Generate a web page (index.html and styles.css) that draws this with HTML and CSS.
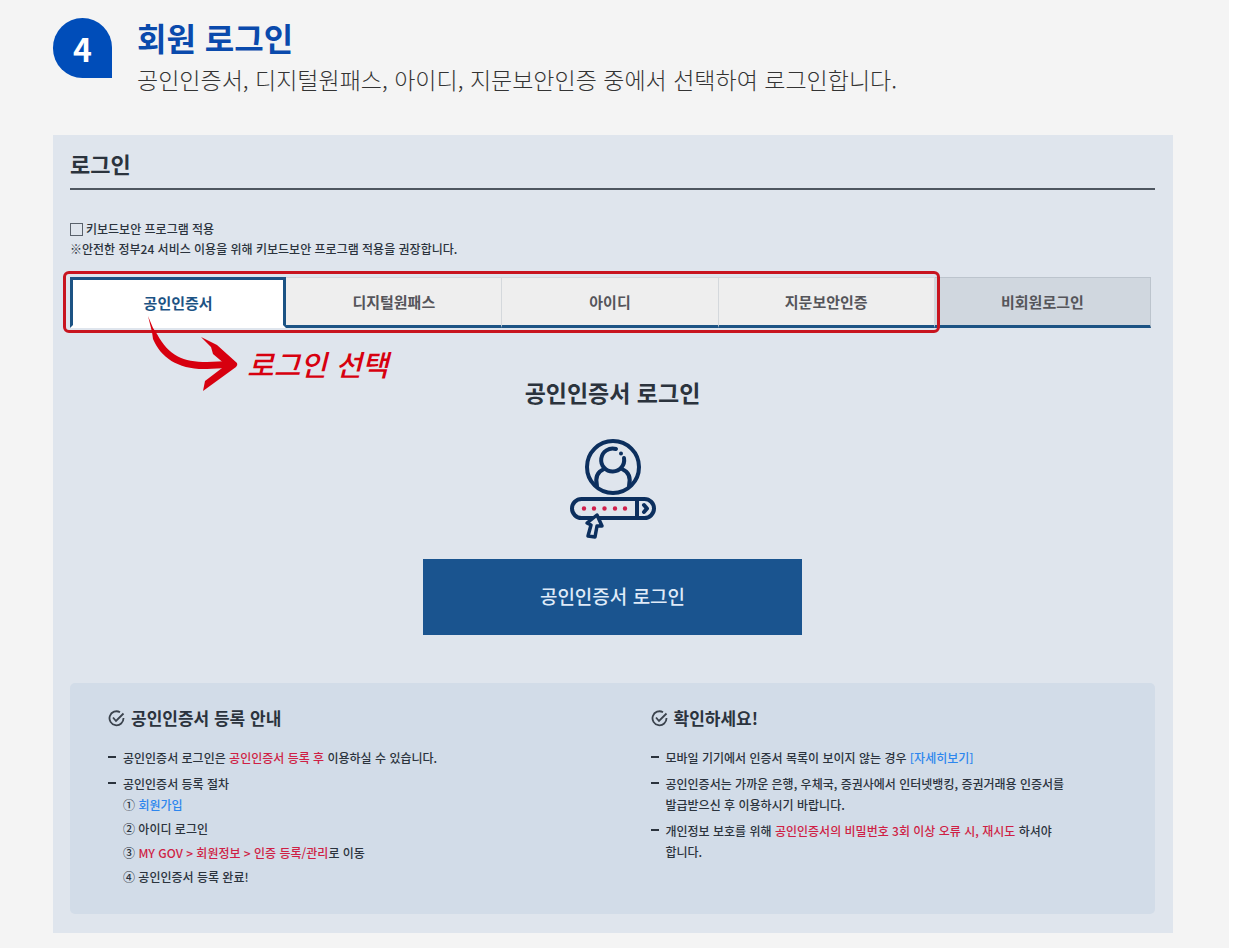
FILE: index.html
```html
<!DOCTYPE html>
<html lang="ko">
<head>
  <meta charset="UTF-8">
  <title>회원 로그인</title>
  <link rel="stylesheet" href="styles.css">
</head>
<body>

  <header class="step">
    <span class="step-number">4</span>
    <div>
      <h1>회원 로그인</h1>
      <p>공인인증서, 디지털원패스, 아이디, 지문보안인증 중에서 선택하여 로그인합니다.</p>
    </div>
  </header>

  <main class="panel">
    <h2 class="panel-title">로그인</h2>

    <div class="security">
      <label class="check" for="keyboard"><input type="checkbox" id="keyboard">키보드보안 프로그램 적용</label>
      <p>※안전한 정부24 서비스 이용을 위해 키보드보안 프로그램 적용을 권장합니다.</p>
    </div>

    <div class="tabs-wrap">
      <nav class="tabs">
        <button type="button" class="tab active">공인인증서</button>
        <button type="button" class="tab">디지털원패스</button>
        <button type="button" class="tab">아이디</button>
        <button type="button" class="tab">지문보안인증</button>
        <button type="button" class="tab guest">비회원로그인</button>
      </nav>
      <div class="highlight"></div>
      <div class="note">
        <svg width="95" height="78" viewBox="0 0 95 78" fill="#d7000f" aria-hidden="true">
          <path d="M3 1 L8 13 L12 19 C24 41 38 47 62 47 L84 46 L82 53 L62 54 C34 55 16 43 8 24 L7 17 Z"/>
          <path d="M56 22 L72 30 L92 48 Q93 50 91 52 L58 76 L60 66 L81 50 L68 39 L66 32 Z"/>
        </svg>
        <span>로그인 선택</span>
      </div>
    </div>

    <section class="login">
      <h2>공인인증서 로그인</h2>
      <svg width="90" height="102" viewBox="0 0 90 102" fill="none" stroke="#0c2f5e" stroke-width="4" stroke-linecap="round" stroke-linejoin="round" aria-hidden="true">
        <circle cx="45" cy="29" r="26"/>
        <path d="M48 11 A11.500 11.500 0 1 0 56 20"/>
        <circle cx="53" cy="15.500" r="2" fill="#0c2f5e" stroke="none"/>
        <path d="M29 48 C27 40 29 34 36 31 M61 48 C63 40 61 34 54 31"/>
        <rect x="4" y="61" width="82" height="19" rx="9.500"/>
        <path d="M69 61 V80"/>
        <path d="M76 67 L79 70.500 L76 74"/>
        <g fill="#d01f4b" stroke="none">
          <circle cx="16" cy="70.500" r="2.200"/>
          <circle cx="26" cy="70.500" r="2.200"/>
          <circle cx="36.500" cy="70.500" r="2.200"/>
          <circle cx="47" cy="70.500" r="2.200"/>
          <circle cx="57" cy="70.500" r="2.200"/>
        </g>
        <path d="M29 77 L19 85 L23 87 L20 98 L27 99 L29 88 L34 88 Z" fill="#dfe5ed" stroke-width="3.500"/>
      </svg>
      <button type="button" class="login-button">공인인증서 로그인</button>
    </section>

    <section class="info">
      <div class="info-col">
        <h3>
          <svg width="17" height="17" viewBox="0 0 17 17" fill="none" stroke="#3b434d" stroke-width="1.800" aria-hidden="true">
            <path d="M12 2.200 A7 7 0 1 0 15.500 8"/>
            <path d="M5 7.500 L8 11 L15.500 3.500"/>
          </svg>
          공인인증서 등록 안내
        </h3>
        <ul>
          <li>공인인증서 로그인은 <em>공인인증서 등록 후</em> 이용하실 수 있습니다.</li>
          <li>공인인증서 등록 절차
            <div class="order">
              <span>① <a href="#">회원가입</a></span>
              <span>② 아이디 로그인</span>
              <span>③ <em>MY GOV &gt; 회원정보 &gt; 인증 등록/관리</em>로 이동</span>
              <span>④ 공인인증서 등록 완료!</span>
            </div>
          </li>
        </ul>
      </div>
      <div class="info-col">
        <h3>
          <svg width="17" height="17" viewBox="0 0 17 17" fill="none" stroke="#3b434d" stroke-width="1.800" aria-hidden="true">
            <path d="M12 2.200 A7 7 0 1 0 15.500 8"/>
            <path d="M5 7.500 L8 11 L15.500 3.500"/>
          </svg>
          확인하세요!
        </h3>
        <ul>
          <li>모바일 기기에서 인증서 목록이 보이지 않는 경우 <a href="#">[자세히보기]</a></li>
          <li>공인인증서는 가까운 은행, 우체국, 증권사에서 인터넷뱅킹, 증권거래용 인증서를 발급받으신 후 이용하시기 바랍니다.</li>
          <li>개인정보 보호를 위해 <em>공인인증서의 비밀번호 3회 이상 오류 시, 재시도</em> 하셔야<br>합니다.</li>
        </ul>
      </div>
    </section>
  </main>

</body>
</html>
```

FILE: styles.css
```css
* {
  box-sizing: border-box;
  margin: 0;
  padding: 0;
}
html {
  background: #fff;
}
body {
  margin-right: 4px;
  padding: 16px 56px 15px 53px;
  background: #f4f4f4;
  color: #2b333d;
  font-family: "Noto Sans CJK KR", "Noto Sans", sans-serif;
  word-break: keep-all;
}
button {
  font-family: inherit;
  cursor: pointer;
}
a {
  color: #2d86ee;
  text-decoration: none;
}
em {
  color: #cf1f45;
  font-style: normal;
}

/* step heading */
.step {
  display: flex;
  gap: 25px;
  margin-bottom: 35px;
}
.step-number {
  width: 59px;
  height: 60px;
  margin-top: 2px;
  border-radius: 30px 30px 0 30px;
  background: #004db9;
  color: #fff;
  font-size: 32px;
  font-weight: 700;
  line-height: 60px;
  text-align: center;
}
.step h1 {
  color: #0a4aac;
  font-size: 32px;
  font-weight: 700;
  line-height: 42px;
}
.step p {
  color: #333;
  font-size: 23px;
  font-weight: 300;
  line-height: 42px;
}

/* login panel */
.panel {
  padding: 8px 18px 19px 17px;
  background: #dfe5ed;
}
.panel-title {
  height: 47px;
  border-bottom: 2px solid #4e5660;
  font-size: 22px;
  font-weight: 700;
  line-height: 40px;
}
.security {
  margin: 29px 0 18px;
  font-size: 12px;
  font-weight: 500;
  line-height: 20px;
}
.check {
  display: flex;
  align-items: center;
  gap: 3px;
}
.check input {
  appearance: none;
  width: 13px;
  height: 13px;
  border: 1px solid #59616b;
}

.tabs-wrap {
  position: relative;
  margin-right: 4px;
}
.tabs {
  display: grid;
  grid-template-columns: repeat(5, 1fr);
}
.tab {
  height: 51px;
  border: solid #d4d8dc;
  border-width: 1px 1px 3px 0;
  border-bottom-color: #1c5384;
  background: #eee;
  color: #55555a;
  font-size: 15px;
  font-weight: 700;
}
.tab.active {
  border: 3px solid #1c5384;
  border-bottom-color: #fff;
  background: #fff;
  color: #1c5384;
}
.tab.guest {
  border-color: #bcc4cd;
  border-bottom-color: #1c5384;
  background: #d0d7df;
}
.highlight {
  position: absolute;
  top: -6px;
  right: calc(20% - 5px);
  bottom: -5px;
  left: -7px;
  border: 3px solid #c8141f;
  border-radius: 6px;
  pointer-events: none;
}
.note {
  position: absolute;
  top: 38px;
  left: 75px;
  display: flex;
  align-items: flex-end;
  gap: 7px;
  color: #d7000f;
  font-size: 29px;
  font-style: italic;
  font-weight: 500;
  line-height: 60px;
  pointer-events: none;
}

.login {
  display: flex;
  flex-direction: column;
  align-items: center;
  margin: 46px 0 48px;
}
.login h2 {
  margin-bottom: 28px;
  font-size: 23px;
  font-weight: 700;
  line-height: 36px;
}
.login-button {
  width: 35%;
  height: 76px;
  margin-top: 19px;
  padding-bottom: 3px;
  border: 0;
  background: #1a548f;
  color: #dfeaf8;
  font-size: 19px;
  font-weight: 500;
}

/* notices */
.info {
  display: grid;
  grid-template-columns: 1fr 1fr;
  padding: 22px 0 27px;
  border-radius: 5px;
  background: #d2dce8;
}
.info-col {
  padding-left: 38px;
}
.info h3 {
  display: flex;
  align-items: center;
  gap: 6px;
  margin-bottom: 16px;
  font-size: 17px;
  font-weight: 700;
  line-height: 26px;
}
.info ul {
  max-width: 425px;
  font-size: 12px;
  font-weight: 500;
  line-height: 21px;
  list-style: none;
}
.info li {
  position: relative;
  padding-left: 15px;
}
.info li + li {
  margin-top: 5px;
}
.info li::before {
  content: "";
  position: absolute;
  top: 9px;
  left: 0;
  width: 8px;
  height: 2px;
  background: #2b333d;
}
.order {
  display: grid;
  gap: 3px;
}
```
